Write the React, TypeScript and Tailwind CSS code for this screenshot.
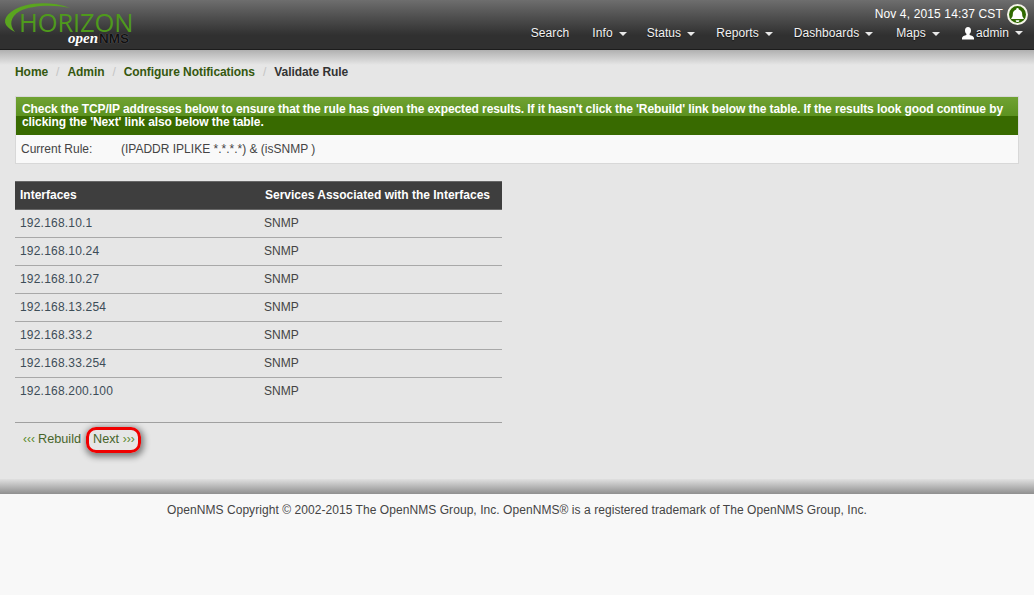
const navItems = [
  { label: 'Info', className: 'ml-[1px]' },
  { label: 'Status', className: 'ml-[-2px]' },
  { label: 'Reports', className: 'ml-[-1px]' },
  { label: 'Dashboards', className: 'ml-[-1px]' },
  { label: 'Maps', className: 'ml-[1px]' },
]

const rows = [
  '192.168.10.1',
  '192.168.10.24',
  '192.168.10.27',
  '192.168.13.254',
  '192.168.33.2',
  '192.168.33.254',
  '192.168.200.100',
]

function Caret() {
  return <span className="ml-[6px] inline-block h-0 w-0 border-x-[4px] border-t-[4px] border-x-transparent border-t-[#e8e8e8] align-middle" />
}

function Logo() {
  return (
    <div className="relative h-[50px] w-[140px] shrink-0">
      <svg className="absolute left-[2px] top-0" width="70" height="34" viewBox="0 0 70 34">
        <path d="M13 32 C 1 26, 0 19, 9 12 C 21 3, 46 0, 68 8 C 48 4, 29 6, 18 11 C 8 17, 7 25, 13 32 Z" fill="#5aa51f" />
      </svg>
      <span className="absolute left-[19px] top-[12px] font-['Open_Sans',sans-serif] text-[25.5px] leading-[20px] tracking-[-0.1px] text-[#4f9a1c]">HORIZON</span>
      <span className="absolute left-[68px] top-[33px] font-['Liberation_Serif',serif] text-[15px] font-bold italic leading-[11px] text-white">open</span>
      <span className="absolute left-[99px] top-[33px] font-['Liberation_Sans',sans-serif] text-[13.5px] font-bold leading-[11px] text-[#111] [text-shadow:0_0_1px_rgba(255,255,255,0.4)]">NMS</span>
    </div>
  )
}

function Header() {
  return (
    <header className="flex h-[50px] justify-between border-b border-[#1c1c1c] bg-gradient-to-b from-[#6e6e6e] to-[#303030] to-[72%]">
      <Logo />
      <div className="flex flex-col items-end pr-[10px]">
        <div className="flex h-[26px] items-center gap-[4px] pt-[2px] text-[12px] tracking-[0.14px] text-white">
          <span>Nov 4, 2015 14:37 CST</span>
          <span className="mr-[-4px] flex size-[21px] items-center justify-center rounded-full border-[2px] border-[#f4f4e8] bg-[#2f6a00]">
            <svg width="15" height="15" viewBox="0 0 24 24" fill="white">
              <path d="M12 1.500a2 2 0 0 1 2 2v.6c3.400.9 5.500 3.800 5.500 7.400 0 3.500 1 5 2.500 6.500v1H2v-1c1.500-1.500 2.500-3 2.500-6.500 0-3.600 2.100-6.500 5.500-7.400v-.6a2 2 0 0 1 2-2Z" />
              <path d="M9 21h6a3 3 0 0 1-6 0Z" />
            </svg>
          </span>
        </div>
        <nav className="flex h-[14px] items-center gap-[22px] pr-[1px] text-[12px] leading-[14px] tracking-[0.08px] text-[#f2f2f2] [text-shadow:0_1px_1px_rgba(0,0,0,0.6)]">
          <span>Search</span>
          {navItems.map((item) => (
            <span key={item.label} className={item.className}>
              {item.label}
              <Caret />
            </span>
          ))}
          <span className="flex items-center">
            <svg width="12" height="13" viewBox="0 0 12 13" fill="white" className="mr-[2px]">
              <path d="M6 0c1.900 0 3 1.400 3 3.400 0 1.400-.6 2.700-1.400 3.400v1.100c1.800.6 4.400 1.300 4.400 3v1.600H0v-1.600c0-1.700 2.600-2.400 4.400-3V6.800C3.600 6.100 3 4.800 3 3.400 3 1.400 4.100 0 6 0Z" />
            </svg>
            admin
            <Caret />
          </span>
        </nav>
      </div>
    </header>
  )
}

function Breadcrumb() {
  const links = ['Home', 'Admin', 'Configure Notifications']
  return (
    <div className="flex h-[14px] items-center text-[12px] font-bold tracking-[-0.06px] text-[#35580f]">
      {links.map((link) => (
        <span key={link} className="flex items-center">
          {link}
          <span className="mx-[8px] font-normal text-[#c4c4c4]">/</span>
        </span>
      ))}
      <span className="text-[#333]">Validate Rule</span>
    </div>
  )
}

function RulePanel() {
  return (
    <section className="mt-[17px] border border-[#d8d8d8] bg-[#f9f9f9]">
      <div className="bg-[linear-gradient(#70a233_0,#5c9220_49%,#386a00_50%,#386a00_100%)] px-[6px] py-[6px] text-[12px] font-bold leading-[13px] tracking-[-0.09px] text-white">
        Check the TCP/IP addresses below to ensure that the rule has given the expected results. If it hasn't click the 'Rebuild' link below the table. If the results look good continue by clicking the 'Next' link also below the table.
      </div>
      <div className="flex h-[28px] items-center px-[5px] pb-[1px] text-[12px] text-[#444]">
        <span className="w-[100px]">Current Rule:</span>
        <span>(IPADDR IPLIKE *.*.*.*) &amp; (isSNMP )</span>
      </div>
    </section>
  )
}

function InterfacesTable() {
  return (
    <div className="mt-[17px] w-[487px]">
      <div className="flex h-[29px] items-center border-y border-[#666] bg-[#3e3e3e] pb-[2px] text-[12px] font-bold text-white">
        <span className="w-[250px] pl-[5px]">Interfaces</span>
        <span>Services Associated with the Interfaces</span>
      </div>
      {rows.map((ip, i) => (
        <div key={ip} className={`flex h-[28px] items-center pb-[2px] text-[12px] text-[#444] ${i < rows.length - 1 ? 'border-b border-[#a8a8a8]' : ''}`}>
          <span className="w-[249px] pl-[5px] tracking-[0.2px] text-[#3d4d58]">{ip}</span>
          <span>SNMP</span>
        </div>
      ))}
    </div>
  )
}

function Pager() {
  return (
    <div className="mt-[16px] flex w-[487px] border-t border-[#a0a0a0] pl-[8px] pt-[9px] text-[12.7px] leading-[15px] text-[#46652a]">
      <span className="text-[12px] text-[#5b8a2a]">‹‹‹</span>
      <span className="ml-[3px]">Rebuild</span>
      <span className="relative ml-[12px]">
        Next <span className="text-[12px] text-[#5b8a2a]">›››</span>
        <span className="absolute left-[-7px] top-[-5px] h-[26px] w-[55px] rounded-[10px] border-[3px] border-[#f00000] shadow-[1px_2px_6px_2px_rgba(0,0,0,0.45)]" />
      </span>
    </div>
  )
}

export default function App() {
  return (
    <div className="flex min-h-[595px] flex-col bg-[#e6e6e6] font-['Liberation_Sans',Arial,sans-serif]">
      <Header />
      <main className="h-[429px] bg-[linear-gradient(#b0b0b0,#e6e6e6_15px)] px-[15px] pt-[15px]">
        <Breadcrumb />
        <RulePanel />
        <InterfacesTable />
        <Pager />
      </main>
      <footer className="flex-1 bg-[linear-gradient(#e0e0e0,#8f8f8f_15px,#f8f8f8_15px)] pt-[24px] text-center text-[12px] leading-[14px] tracking-[0.06px] text-[#444]">
        OpenNMS Copyright © 2002-2015 The OpenNMS Group, Inc. OpenNMS® is a registered trademark of The OpenNMS Group, Inc.
      </footer>
    </div>
  )
}
